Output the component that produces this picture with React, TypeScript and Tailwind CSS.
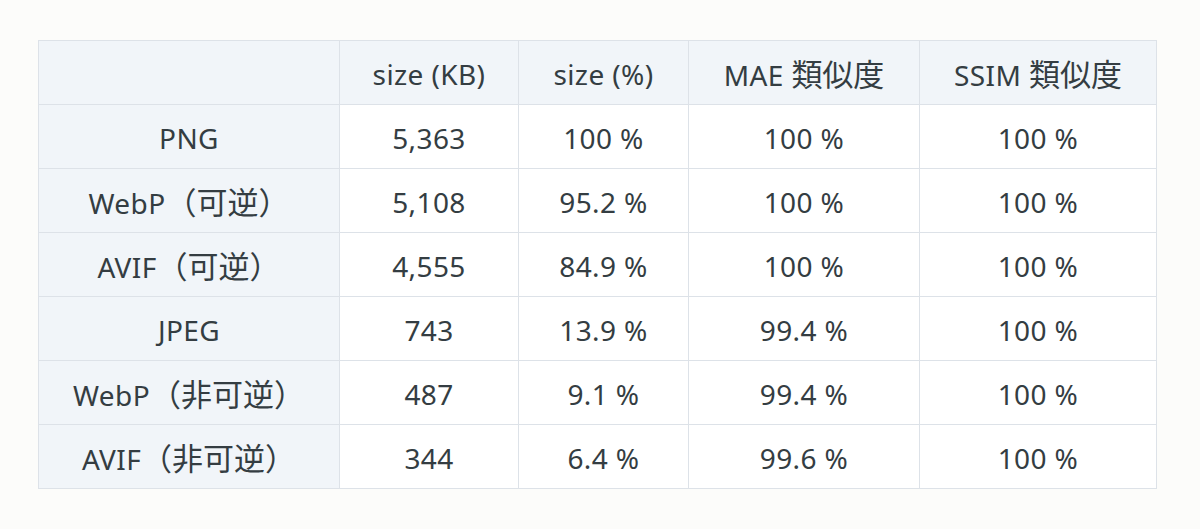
import React from 'react';

const headers = ['', 'size (KB)', 'size (%)', 'MAE 類似度', 'SSIM 類似度'];

const rows: string[][] = [
  ['PNG', '5,363', '100 %', '100 %', '100 %'],
  ['WebP（可逆）', '5,108', '95.2 %', '100 %', '100 %'],
  ['AVIF（可逆）', '4,555', '84.9 %', '100 %', '100 %'],
  ['JPEG', '743', '13.9 %', '99.4 %', '100 %'],
  ['WebP（非可逆）', '487', '9.1 %', '99.4 %', '100 %'],
  ['AVIF（非可逆）', '344', '6.4 %', '99.6 %', '100 %'],
];

const widths = ['w-[301px]', 'w-[179px]', 'w-[170px]', 'w-[231px]', 'w-[237px]'];

// CJK glyphs sit a bit larger than the latin ones in the reference
function Label({ text }: { text: string }) {
  const parts = text.split(/([\u3000-\u9fff\uff00-\uffef]+)/).filter(Boolean);
  return (
    <>
      {parts.map((p, i) =>
        /[\u3000-\u9fff\uff00-\uffef]/.test(p) ? (
          <span key={i} className="text-[31px] tracking-normal">{p}</span>
        ) : (
          <span key={i}>{p}</span>
        )
      )}
    </>
  );
}

export default function App() {
  return (
    <div
      className="w-[1200px] h-[529px] bg-[#fcfcfa] pt-[40px] pl-[38px] text-[#343d42]"
      style={{ fontFamily: '"Noto Sans", "Noto Sans CJK JP", sans-serif' }}
    >
      <table className="border-collapse border border-[#dde2e8] text-[28px] leading-[40px] tracking-[0.4px]">
        <thead>
          <tr className="h-[64px] bg-[#f1f5f9]">
            {headers.map((h, i) => (
              <th key={i} className={`${widths[i]} border border-[#dde2e8] font-normal text-center pt-[3px]`}>
                <Label text={h} />
              </th>
            ))}
          </tr>
        </thead>
        <tbody>
          {rows.map((r) => (
            <tr key={r[0]} className="h-[64px]">
              {r.map((c, i) => (
                <td
                  key={i}
                  className={`${widths[i]} border border-[#dde2e8] text-center pt-[3px] ${i === 0 ? 'bg-[#f1f5f9]' : 'bg-white'}`}
                >
                  <Label text={c} />
                </td>
              ))}
            </tr>
          ))}
        </tbody>
      </table>
    </div>
  );
}
